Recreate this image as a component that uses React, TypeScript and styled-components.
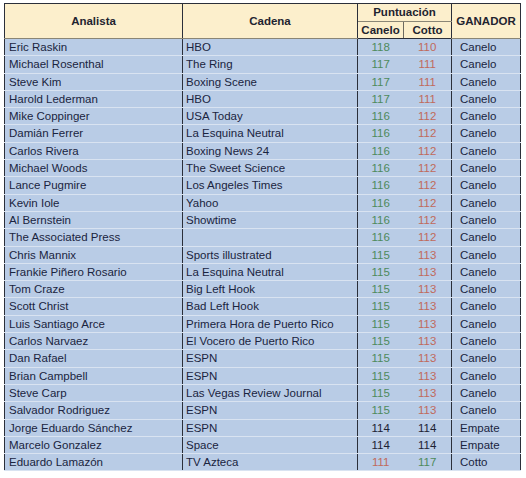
import styled, {createGlobalStyle} from "styled-components";

const GlobalStyle = createGlobalStyle`
  html, body {
    margin: 0;
    padding: 0;
    background: #ffffff;
  }
`;

const Page = styled.div`
  padding: 3px 0 0 4px;
  font-family: "Liberation Sans", Arial, sans-serif;
`;

const Table = styled.table`
  border-collapse: collapse;
  border: 1.5px solid #2b2f3a;
  table-layout: fixed;
  width: 516px;
  color: #1d2740;
  font-size: 11.5px;
`;

const Col = styled.col<{ $w: number }>`
  width: ${(p) => p.$w}px;
`;

const Head = styled.th<{ $divider?: boolean }>`
  background: #fcefcc;
  font-weight: bold;
  font-size: 11.5px;
  height: 16.5px;
  line-height: 16px;
  padding: 0;
  text-align: center;
  color: #1f2430;
  border-right: ${(p) => (p.$divider ? "1px solid #6d6a60" : "1.5px solid #2b2f3a")};
  border-bottom: 1px solid #8a8676;
`;

const HeadRow = styled.tr`
  &:last-child th {
    border-bottom: 1.5px solid #2b2f3a;
  }
`;

const Row = styled.tr`
  background: #b9cce6;
`;

const Cell = styled.td<{ $center?: boolean; $divider?: boolean; $color?: string; $pad?: number }>`
  padding: 0 0 0 ${(p) => (p.$center ? 0 : p.$pad ?? 4)}px;
  height: 16.3px;
  line-height: 16.3px;
  text-align: ${(p) => (p.$center ? "center" : "left")};
  color: ${(p) => p.$color || "#1a2440"};
  white-space: nowrap;
  overflow: hidden;
  border-bottom: 1px solid #d9e3f1;
  border-right: ${(p) => (p.$divider ? "none" : "1.5px solid #2b2f3a")};
`;

const GREEN = "#4e8a5c";
const RED = "#c06a5c";
const BLACK = "#1d2233";

type Entry = [string, string, number, number, string];

const rows: Entry[] = [
  ["Eric Raskin", "HBO", 118, 110, "Canelo"],
  ["Michael Rosenthal", "The Ring", 117, 111, "Canelo"],
  ["Steve Kim", "Boxing Scene", 117, 111, "Canelo"],
  ["Harold Lederman", "HBO", 117, 111, "Canelo"],
  ["Mike Coppinger", "USA Today", 116, 112, "Canelo"],
  ["Damián Ferrer", "La Esquina Neutral", 116, 112, "Canelo"],
  ["Carlos Rivera", "Boxing News 24", 116, 112, "Canelo"],
  ["Michael Woods", "The Sweet Science", 116, 112, "Canelo"],
  ["Lance Pugmire", "Los Angeles Times", 116, 112, "Canelo"],
  ["Kevin Iole", "Yahoo", 116, 112, "Canelo"],
  ["Al Bernstein", "Showtime", 116, 112, "Canelo"],
  ["The Associated Press", "", 116, 112, "Canelo"],
  ["Chris Mannix", "Sports illustrated", 115, 113, "Canelo"],
  ["Frankie Piñero Rosario", "La Esquina Neutral", 115, 113, "Canelo"],
  ["Tom Craze", "Big Left Hook", 115, 113, "Canelo"],
  ["Scott Christ", "Bad Left Hook", 115, 113, "Canelo"],
  ["Luis Santiago Arce", "Primera Hora de Puerto Rico", 115, 113, "Canelo"],
  ["Carlos Narvaez", "El Vocero de Puerto Rico", 115, 113, "Canelo"],
  ["Dan Rafael", "ESPN", 115, 113, "Canelo"],
  ["Brian Campbell", "ESPN", 115, 113, "Canelo"],
  ["Steve Carp", "Las Vegas Review Journal", 115, 113, "Canelo"],
  ["Salvador Rodriguez", "ESPN", 115, 113, "Canelo"],
  ["Jorge Eduardo Sánchez", "ESPN", 114, 114, "Empate"],
  ["Marcelo Gonzalez", "Space", 114, 114, "Empate"],
  ["Eduardo Lamazón", "TV Azteca", 111, 117, "Cotto"],
];

const scoreColor = (a: number, b: number) => (a > b ? GREEN : a < b ? RED : BLACK);

const App = () => {
  return (
    <Page>
      <GlobalStyle />
      <Table>
        <colgroup>
          <Col $w={178} />
          <Col $w={175} />
          <Col $w={46} />
          <Col $w={48} />
          <Col $w={69} />
        </colgroup>
        <thead>
          <HeadRow>
            <Head rowSpan={2}>Analista</Head>
            <Head rowSpan={2}>Cadena</Head>
            <Head colSpan={2}>Puntuación</Head>
            <Head rowSpan={2}>GANADOR</Head>
          </HeadRow>
          <HeadRow>
            <Head $divider>Canelo</Head>
            <Head>Cotto</Head>
          </HeadRow>
        </thead>
        <tbody>
          {rows.map(([name, outlet, canelo, cotto, winner]) => (
            <Row key={name}>
              <Cell>{name}</Cell>
              <Cell $pad={3}>{outlet}</Cell>
              <Cell $center $divider $color={scoreColor(canelo, cotto)}>{canelo}</Cell>
              <Cell $center $color={scoreColor(cotto, canelo)}>{cotto}</Cell>
              <Cell $pad={8}>{winner}</Cell>
            </Row>
          ))}
        </tbody>
      </Table>
    </Page>
  );
};

export default App;
